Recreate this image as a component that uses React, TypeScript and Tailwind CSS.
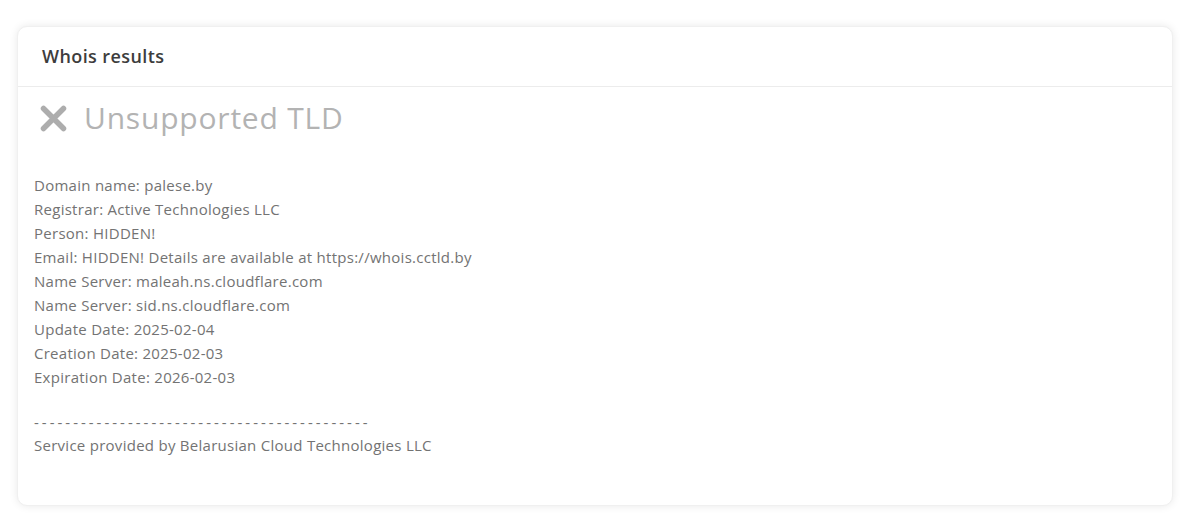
import React from "react";

const lines = [
  "Domain name: palese.by",
  "Registrar: Active Technologies LLC",
  "Person: HIDDEN!",
  "Email: HIDDEN! Details are available at https://whois.cctld.by",
  "Name Server: maleah.ns.cloudflare.com",
  "Name Server: sid.ns.cloudflare.com",
  "Update Date: 2025-02-04",
  "Creation Date: 2025-02-03",
  "Expiration Date: 2026-02-03",
];

const font = { fontFamily: "'Open Sans', Lato, sans-serif" };

export default function App() {
  return (
    <div className="min-h-[523px] bg-white pt-[26px] pl-[17px] pr-[27px] pb-[17px]" style={font}>
      <div className="rounded-[10px] bg-white shadow-[0_0_8px_rgba(0,0,0,0.09)] border border-[#f0f0f0]">
        <div className="h-[60px] flex items-center px-6 border-b border-[#ececec]">
          <h2 className="text-[18px] font-semibold tracking-[0.4px] text-[#3d3d3d]">Whois results</h2>
        </div>
        <div className="px-4 pt-[13px] pb-[48px]">
          <div className="flex items-center gap-[16px] pl-[5px] h-[36px]">
            <svg width="29" height="29" viewBox="0 0 29 29" className="shrink-0">
              <path d="M4.5 4.5 L24.5 24.5 M24.5 4.5 L4.5 24.5" stroke="#adadad" strokeWidth="5.5" strokeLinecap="round" fill="none" />
            </svg>
            <span className="text-[30px] leading-[36px] tracking-[0.8px] text-[#b3b3b3]">Unsupported TLD</span>
          </div>
          <div className="mt-[37px] text-[15px] leading-[24px] tracking-[0.27px] text-[#737373]">
            {lines.map((l) => (
              <div key={l}>{l}</div>
            ))}
            <div className="h-[22px]" />
            <div className="tracking-[3px] leading-[22px]">-------------------------------------------</div>
            <div>Service provided by Belarusian Cloud Technologies LLC</div>
          </div>
        </div>
      </div>
    </div>
  );
}
